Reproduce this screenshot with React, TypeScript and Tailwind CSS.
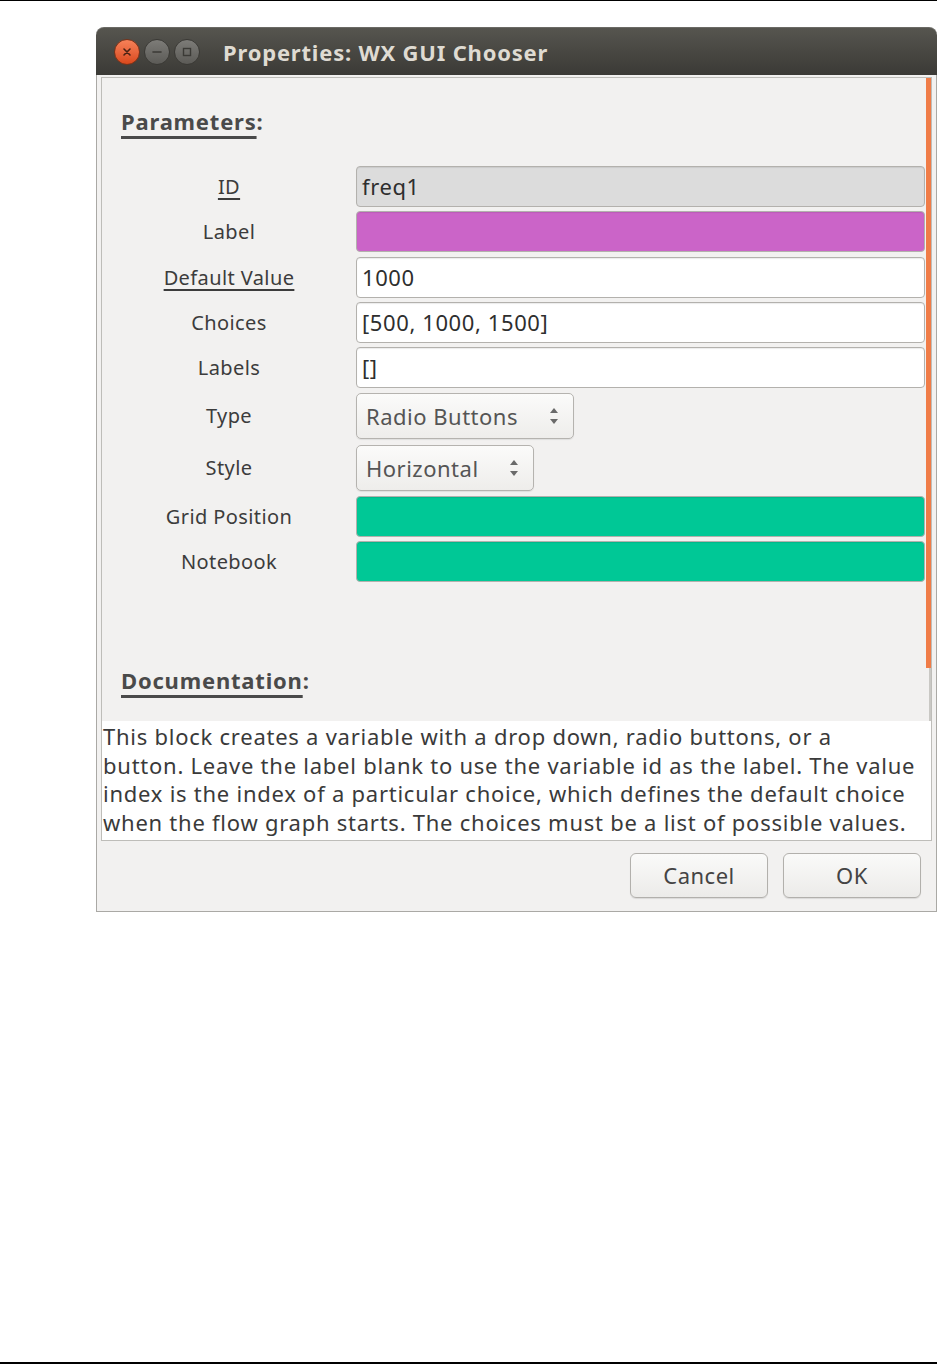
import React from 'react'

const font = "font-['Noto_Sans','Open_Sans',sans-serif]"

type Row = {
  label: string
  underline?: boolean
  kind: 'entry' | 'combo'
  value?: string
  bg?: string
  rowH: string
  comboW?: string
}

const rows: Row[] = [
  { label: 'ID', underline: true, kind: 'entry', value: 'freq1', bg: 'bg-[#dcdcdc]', rowH: 'h-[45px]' },
  { label: 'Label', kind: 'entry', value: '', bg: 'bg-[#cb64c8]', rowH: 'h-[46px]' },
  { label: 'Default Value', underline: true, kind: 'entry', value: '1000', bg: 'bg-white', rowH: 'h-[45px]' },
  { label: 'Choices', kind: 'entry', value: '[500, 1000, 1500]', bg: 'bg-white', rowH: 'h-[45px]' },
  { label: 'Labels', kind: 'entry', value: '[]', bg: 'bg-white', rowH: 'h-[46px]' },
  { label: 'Type', kind: 'combo', value: 'Radio Buttons', rowH: 'h-[52px]', comboW: 'w-[218px]' },
  { label: 'Style', kind: 'combo', value: 'Horizontal', rowH: 'h-[51px]', comboW: 'w-[178px]' },
  { label: 'Grid Position', kind: 'entry', value: '', bg: 'bg-[#00c896]', rowH: 'h-[45px]' },
  { label: 'Notebook', kind: 'entry', value: '', bg: 'bg-[#00c896]', rowH: 'h-[41px]' },
]

const docLines = [
  'This block creates a variable with a drop down, radio buttons, or a',
  'button. Leave the label blank to use the variable id as the label. The value',
  'index is the index of a particular choice, which defines the default choice',
  'when the flow graph starts. The choices must be a list of possible values.',
  'Leave labels empty to use the choices as the labels.',
]

function UpDown() {
  return (
    <svg width="12" height="24" viewBox="0 0 12 24" className="shrink-0">
      <path d="M6 4 L10 9 L2 9 Z" fill="#6a6a6a" />
      <path d="M6 20 L10 15 L2 15 Z" fill="#6a6a6a" />
    </svg>
  )
}

function TitleButtons() {
  return (
    <div className="flex items-center gap-[4px]">
      <div className="w-[26px] h-[26px] rounded-full bg-gradient-to-b from-[#f68158] to-[#d9481b] border border-[#7a3218] flex items-center justify-center">
        <svg width="10" height="10" viewBox="0 0 10 10">
          <path d="M2 2 L8 8 M8 2 L2 8" stroke="#4a2214" strokeWidth="1.6" strokeLinecap="round" />
        </svg>
      </div>
      <div className="w-[26px] h-[26px] rounded-full bg-gradient-to-b from-[#7d7c78] to-[#5c5b57] border border-[#3a3935] flex items-center justify-center">
        <svg width="12" height="12" viewBox="0 0 12 12">
          <path d="M2 6 L10 6" stroke="#3b3a36" strokeWidth="1.6" strokeLinecap="round" />
        </svg>
      </div>
      <div className="w-[26px] h-[26px] rounded-full bg-gradient-to-b from-[#7d7c78] to-[#5c5b57] border border-[#3a3935] flex items-center justify-center">
        <svg width="12" height="12" viewBox="0 0 12 12">
          <rect x="2.5" y="2.5" width="7" height="7" fill="none" stroke="#3b3a36" strokeWidth="1.4" />
        </svg>
      </div>
    </div>
  )
}

export default function App() {
  return (
    <div className={`w-[937px] h-[1364px] bg-white flex flex-col overflow-hidden ${font}`}>
      <div className="h-px bg-black shrink-0" />

      {/* window */}
      <div className="ml-[96px] mt-[26px] w-[841px] h-[885px] flex flex-col shrink-0">
        {/* title bar */}
        <div className="h-[48px] rounded-t-[8px] bg-gradient-to-b from-[#56554f] to-[#3b3a36] border-t border-[#6b6a65] flex items-center pl-[18px] shrink-0">
          <TitleButtons />
          <span className="ml-[23px] text-[22px] font-bold text-[#dfdbd2] tracking-[0.8px] leading-none">
            Properties: WX GUI Chooser
          </span>
        </div>

        {/* body */}
        <div className="flex-1 bg-[#f2f1f0] border-x border-b border-[#aaa9a5] pl-[4px] pt-[2px] flex flex-col">
          {/* pane */}
          <div className="w-[831px] h-[764px] border-l border-r border-t border-b border-[#bebdb9] flex flex-col">
            <div className="flex h-[643px]">
              <div className="w-[824px] flex flex-col">
                <div className="mt-[29px] pl-[19px] h-[28px] text-[22px] font-bold tracking-[0.8px] text-[#4a4a4a] leading-[28px]">
                  <span className="underline decoration-[3px] underline-offset-[6px]">Parameters</span>:
                </div>
                <div className="mt-[31px] flex flex-col">
                  {rows.map((r) => (
                    <div key={r.label} className={`flex ${r.rowH}`}>
                      <div
                        className={`w-[254px] ${r.kind === 'combo' ? 'h-[46px]' : 'h-[41px]'} flex items-center justify-center text-[20px] tracking-[0.4px] text-[#3c3c3c]`}
                      >
                        <span className={r.underline ? 'underline decoration-[1.5px] underline-offset-[4px]' : ''}>{r.label}</span>
                      </div>
                      {r.kind === 'entry' ? (
                        <div
                          className={`w-[569px] h-[41px] ${r.bg} rounded-[4px] border border-[#b3b1ad] shadow-[inset_0_1px_1px_rgba(0,0,0,0.08)] flex items-center pl-[5px] text-[22px] tracking-[0.6px] text-[#2e2e2e]`}
                        >
                          {r.value}
                        </div>
                      ) : (
                        <div
                          className={`${r.comboW} h-[46px] rounded-[5px] border border-[#b5b3af] bg-gradient-to-b from-[#fbfbfa] to-[#eeedeb] shadow-[0_1px_1px_rgba(0,0,0,0.08)] flex items-center justify-between pl-[9px] pr-[13px] text-[22px] tracking-[0.5px] text-[#555555]`}
                        >
                          <span>{r.value}</span>
                          <UpDown />
                        </div>
                      )}
                    </div>
                  ))}
                </div>
                <div className="mt-[84px] pl-[19px] h-[28px] text-[22px] font-bold tracking-[0.8px] text-[#4a4a4a] leading-[28px]">
                  <span className="underline decoration-[3px] underline-offset-[6px]">Documentation</span>:
                </div>
              </div>
              {/* scrollbar */}
              <div className="w-[5px] flex flex-col">
                <div className="h-[590px] bg-[#f07c47]" />
                <div className="flex-1 flex justify-end">
                  <div className="w-[2px] bg-[#c9c8c4]" />
                </div>
              </div>
            </div>
            {/* documentation */}
            <div className="flex-1 bg-white overflow-hidden pl-[1px] pt-[1px] text-[22px] leading-[28.5px] text-[#3a3a3a]">
              {docLines.map((l) => (
                <div key={l} className="whitespace-nowrap tracking-[0.75px]">
                  {l}
                </div>
              ))}
            </div>
          </div>

          {/* buttons */}
          <div className="mt-[12px] flex justify-end gap-[15px] pr-[15px]">
            {['Cancel', 'OK'].map((b) => (
              <div
                key={b}
                className="w-[138px] h-[45px] rounded-[6px] border border-[#b2b0ac] bg-gradient-to-b from-[#fafaf9] to-[#ecebe9] shadow-[0_1px_1px_rgba(0,0,0,0.1)] flex items-center justify-center text-[22px] tracking-[0.5px] text-[#444444]"
              >
                {b}
              </div>
            ))}
          </div>
        </div>
      </div>

      <div className="flex-1" />
      <div className="h-[2px] bg-black shrink-0" />
    </div>
  )
}
